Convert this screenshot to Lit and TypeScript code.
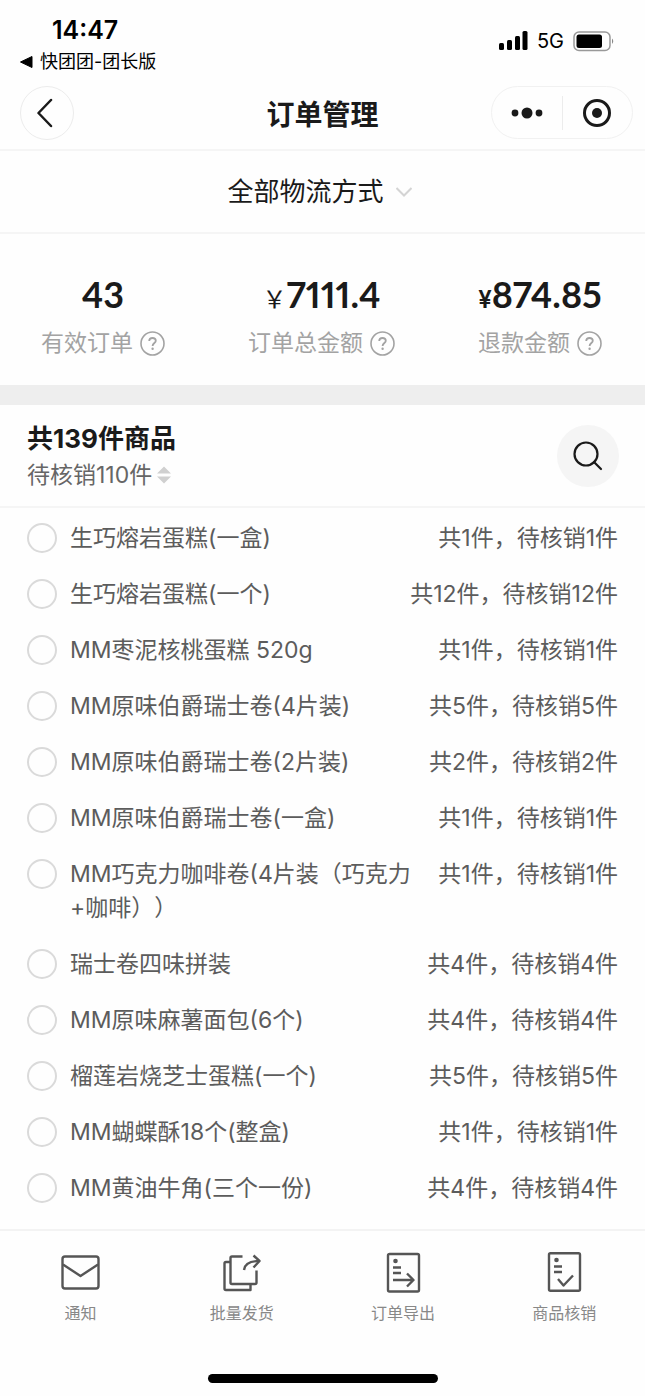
import { LitElement, html, svg, css } from "lit";
import { customElement, state } from "lit/decorators.js";

interface Product {
  name: string;
  count: number;
}

const PRODUCTS: Product[] = [
  { name: "生巧熔岩蛋糕(一盒)", count: 1 },
  { name: "生巧熔岩蛋糕(一个)", count: 12 },
  { name: "MM枣泥核桃蛋糕 520g", count: 1 },
  { name: "MM原味伯爵瑞士卷(4片装)", count: 5 },
  { name: "MM原味伯爵瑞士卷(2片装)", count: 2 },
  { name: "MM原味伯爵瑞士卷(一盒)", count: 1 },
  { name: "MM巧克力咖啡卷(4片装（巧克力+咖啡））", count: 1 },
  { name: "瑞士卷四味拼装", count: 4 },
  { name: "MM原味麻薯面包(6个)", count: 4 },
  { name: "榴莲岩烧芝士蛋糕(一个)", count: 5 },
  { name: "MM蝴蝶酥18个(整盒)", count: 1 },
  { name: "MM黄油牛角(三个一份)", count: 4 },
];

const STATS = [
  { label: "有效订单", sign: "", value: "43", cls: "" },
  { label: "订单总金额", sign: "￥", value: "7111.4", cls: "wide" },
  { label: "退款金额", sign: "¥", value: "874.85", cls: "" },
];

const TABS = [
  {
    label: "通知",
    icon: svg`<rect x="3.5" y="4.500" width="36" height="32" rx="2.5"/><path d="M4 12.500 21.5 24 39 12.500"/>`,
  },
  {
    label: "批量发货",
    icon: svg`<path d="M22.500 4.500H12Q10.500 4.500 10.500 6V30.500Q10.500 32 12 32H35Q36.500 32 36.500 30.500V18.500"/><path d="M10.500 10H6Q4.500 10 4.500 11.500V36.500Q4.500 38 6 38H30.500V32"/><path d="M24 18Q25 9 39 9"/><path d="M33.500 3.500 39.500 9 33.500 15.500"/>`,
  },
  {
    label: "订单导出",
    icon: svg`<rect x="6" y="2" width="31" height="37.500" rx="1.500"/><circle cx="13.500" cy="9" r="2.300" fill="#555" stroke="none"/><path d="M11 15.500h8M11 21h8M11 28h20M25 21.500 31.500 28 25 34.500"/>`,
  },
  {
    label: "商品核销",
    icon: svg`<rect x="6" y="1.200" width="31" height="37.500" rx="1.500"/><circle cx="13.500" cy="8" r="2.300" fill="#555" stroke="none"/><path d="M11 14.500h8M11 20h8M15 27 20.500 33.500 30 23.500"/>`,
  },
];

@customElement("app-root")
export class AppRoot extends LitElement {
  @state() private picked = new Set<number>();

  static styles = css`
    :host {
      display: block;
      min-height: 100vh;
      background: #fefefe;
      color: #1a1a1a;
      font-family: Inter, "Noto Sans CJK SC", sans-serif;
      text-spacing-trim: space-all;
    }
    * {
      box-sizing: border-box;
    }
    button,
    select {
      margin: 0;
      padding: 0;
      border: 0;
      background: none;
      font: inherit;
      color: inherit;
      cursor: pointer;
    }
    svg {
      display: block;
      flex: none;
    }
    .status {
      display: flex;
      justify-content: space-between;
      height: 76px;
      padding: 16px 30px 0 20px;
      color: #000;
    }
    .time {
      padding-left: 32px;
      font-size: 25px;
      line-height: 28px;
      font-weight: 600;
    }
    .return {
      display: flex;
      align-items: center;
      gap: 7px;
      margin-top: 4px;
      font-size: 18px;
      line-height: 28px;
      color: inherit;
      text-decoration: none;
    }
    .signals {
      display: flex;
      align-items: center;
      height: 50px;
      gap: 9px;
      font-size: 20px;
    }
    .titlebar {
      display: grid;
      grid-template-columns: 1fr auto 1fr;
      align-items: center;
      height: 75px;
      padding: 0 12px;
      border-bottom: 2px solid #f5f5f5;
    }
    .title {
      margin: 0;
      padding-top: 4px;
      font-size: 28px;
      line-height: 40px;
      font-weight: 700;
    }
    .back {
      display: grid;
      place-items: center;
      width: 54px;
      height: 54px;
      margin-left: 8px;
      border: 1px solid #ececec;
      border-radius: 50%;
    }
    .capsule {
      display: flex;
      align-items: center;
      justify-self: end;
      width: 142px;
      height: 53px;
      border: 1px solid #f1f1f1;
      border-radius: 27px;
    }
    .capsule button {
      flex: 1;
      display: grid;
      place-items: center;
    }
    .divider {
      width: 1px;
      height: 34px;
      background: #ececec;
    }
    .filter {
      display: flex;
      align-items: center;
      justify-content: center;
      gap: 12px;
      height: 83px;
      padding-right: 6px;
      border-bottom: 2px solid #f5f5f5;
    }
    .filter select {
      appearance: none;
      field-sizing: content;
      font-size: 26px;
      line-height: 40px;
    }
    .stats {
      display: flex;
      justify-content: space-between;
      margin: 0;
      padding: 35px 43px 27px 41px;
      border-bottom: 20px solid #eeeeee;
    }
    .stat {
      display: flex;
      flex-direction: column-reverse;
      align-items: center;
      gap: 9px;
    }
    .stat dt {
      display: flex;
      align-items: center;
      gap: 7px;
      font-size: 23px;
      line-height: 30px;
      color: #a3a3a3;
    }
    .stat dd {
      display: flex;
      align-items: baseline;
      height: 50px;
      margin: 0;
      font-family: Lato, sans-serif;
      font-size: 36px;
      line-height: 50px;
      font-weight: 700;
      font-feature-settings: "pnum";
    }
    .sign {
      font-family: Inter, sans-serif;
      font-size: 24px;
      line-height: 24px;
      font-weight: 600;
    }
    .wide {
      font-family: "Noto Sans CJK SC", sans-serif;
      font-weight: 400;
    }
    .summary {
      display: flex;
      align-items: center;
      justify-content: space-between;
      height: 103px;
      padding: 0 26px 0 27px;
      border-bottom: 2px solid #f5f5f5;
    }
    .total {
      margin: 0;
      font-size: 26px;
      line-height: 38px;
      font-weight: 700;
    }
    .pending {
      display: flex;
      align-items: center;
      gap: 5px;
      font-size: 23px;
      line-height: 34px;
      color: #666;
    }
    .search {
      display: grid;
      place-items: center;
      width: 62px;
      height: 62px;
      border-radius: 50%;
      background: #f5f5f5;
    }
    .list {
      margin: 0;
      padding: 2px 27px 13px;
      list-style: none;
    }
    .row {
      display: flex;
      align-items: flex-start;
      padding: 11px 0;
      font-size: 23px;
      line-height: 34px;
      color: #5c5c5c;
    }
    .pick {
      appearance: none;
      flex: none;
      width: 30px;
      height: 30px;
      margin: 2px 13px 2px 0;
      border: 2px solid #dadada;
      border-radius: 50%;
    }
    .pick:checked {
      border: 9px solid #1a1a1a;
    }
    .name {
      flex: 1;
    }
    .count {
      margin-left: 27px;
      white-space: nowrap;
    }
    .tabs {
      display: grid;
      grid-template-columns: repeat(4, 1fr);
      padding: 21px 0 49px;
      border-top: 2px solid #f3f3f3;
    }
    .tab {
      display: flex;
      flex-direction: column;
      align-items: center;
      gap: 6px;
      font-size: 16px;
      line-height: 24px;
      color: #888;
    }
    .home {
      width: 230px;
      height: 9px;
      margin: 0 auto;
      border-radius: 5px;
      background: #000;
    }
  `;

  private toggle(i: number) {
    const next = new Set(this.picked);
    next.has(i) ? next.delete(i) : next.add(i);
    this.picked = next;
  }

  private help() {
    return html`<svg width="25" height="25" viewBox="0 0 25 25" fill="none" stroke="#a3a3a3" stroke-width="1.600" aria-hidden="true">
      <circle cx="12.500" cy="12.500" r="11.500" />
      <path d="M9.200 10Q9.300 7 12.500 7T15.800 9.800C15.800 12 12.600 12.200 12.600 15" stroke-width="1.800" />
      <circle cx="12.600" cy="17.700" r="1.200" fill="#a3a3a3" stroke="none" />
    </svg>`;
  }

  render() {
    return html`
      <div class="status">
        <div>
          <div class="time">14:47</div>
          <a class="return" href="#">
            <svg width="13" height="12" viewBox="0 0 13 12"><path d="M.500 6 12 .500v11z" stroke="#000" stroke-linejoin="round" /></svg>
            快团团-团长版
          </a>
        </div>
        <div class="signals">
          <svg width="29" height="20" viewBox="0 0 29 20">
            <rect x="0" y="12" width="5" height="7" rx="1.500" /><rect x="8" y="9" width="5" height="10" rx="1.500" />
            <rect x="16" y="5" width="5" height="14" rx="1.500" /><rect x="23.500" y="0" width="5" height="19" rx="1.500" />
          </svg>
          <span>5G</span>
          <svg width="42" height="21" viewBox="0 0 42 21">
            <rect x="1" y="1" width="36" height="18.500" rx="5" fill="none" stroke="#999" stroke-width="1.500" />
            <rect x="3.500" y="3.500" width="25.500" height="13.500" rx="2.500" />
            <path d="M39 7.500Q41.500 10 39 13z" fill="#888" />
          </svg>
        </div>
      </div>

      <header class="titlebar">
        <button class="back" aria-label="返回">
          <svg width="20" height="32" viewBox="0 0 20 32" fill="none" stroke="#1a1a1a" stroke-width="2.500" stroke-linecap="round" stroke-linejoin="round"><path d="M14 3 1.500 16 14 29" /></svg>
        </button>
        <h1 class="title">订单管理</h1>
        <div class="capsule">
          <button aria-label="更多">
            <svg width="32" height="12" viewBox="0 0 32 12" fill="#1a1a1a"><circle cx="4" cy="6" r="3.400" /><circle cx="16" cy="6" r="5.500" /><circle cx="28" cy="6" r="3.400" /></svg>
          </button>
          <span class="divider"></span>
          <button aria-label="关闭">
            <svg width="30" height="30" viewBox="0 0 30 30"><circle cx="15" cy="15" r="12.500" fill="none" stroke="#1a1a1a" stroke-width="3" /><circle cx="15" cy="15" r="5" fill="#1a1a1a" /></svg>
          </button>
        </div>
      </header>

      <label class="filter">
        <select aria-label="物流方式"><option>全部物流方式</option></select>
        <svg width="16" height="10" viewBox="0 0 16 10" fill="none" stroke="#d4d4d4" stroke-width="2"><path d="M.500 1 8 8.500 15.500 1" /></svg>
      </label>

      <dl class="stats">
        ${STATS.map(
          (s) => html`<div class="stat">
            <dt>${s.label}${this.help()}</dt>
            <dd>${s.sign ? html`<span class="sign ${s.cls}">${s.sign}</span>` : ""}${s.value}</dd>
          </div>`
        )}
      </dl>

      <section class="summary">
        <div>
          <h2 class="total">共139件商品</h2>
          <button class="pending">
            待核销110件
            <svg width="14" height="18" viewBox="0 0 14 18" fill="#d0d0d0"><path d="M0 7.500 7 .500l7 7zM0 10.500h14l-7 7z" /></svg>
          </button>
        </div>
        <button class="search" aria-label="搜索">
          <svg width="30" height="30" viewBox="0 0 30 30" fill="none" stroke="#1a1a1a" stroke-width="2.200" stroke-linecap="round"><circle cx="13" cy="13" r="11.500" /><path d="m21 21 7 7" /></svg>
        </button>
      </section>

      <ul class="list">
        ${PRODUCTS.map(
          (p, i) => html`<li class="row">
            <input class="pick" type="checkbox" id="p${i}" .checked=${this.picked.has(i)} @change=${() => this.toggle(i)} />
            <label class="name" for="p${i}">${p.name}</label>
            <span class="count">共${p.count}件，待核销${p.count}件</span>
          </li>`
        )}
      </ul>

      <nav class="tabs">
        ${TABS.map(
          (t) => html`<button class="tab">
            <svg width="43" height="43" viewBox="0 0 43 43" fill="none" stroke="#555" stroke-width="2.400" stroke-linejoin="round">${t.icon}</svg>
            ${t.label}
          </button>`
        )}
      </nav>
      <div class="home"></div>
    `;
  }
}
